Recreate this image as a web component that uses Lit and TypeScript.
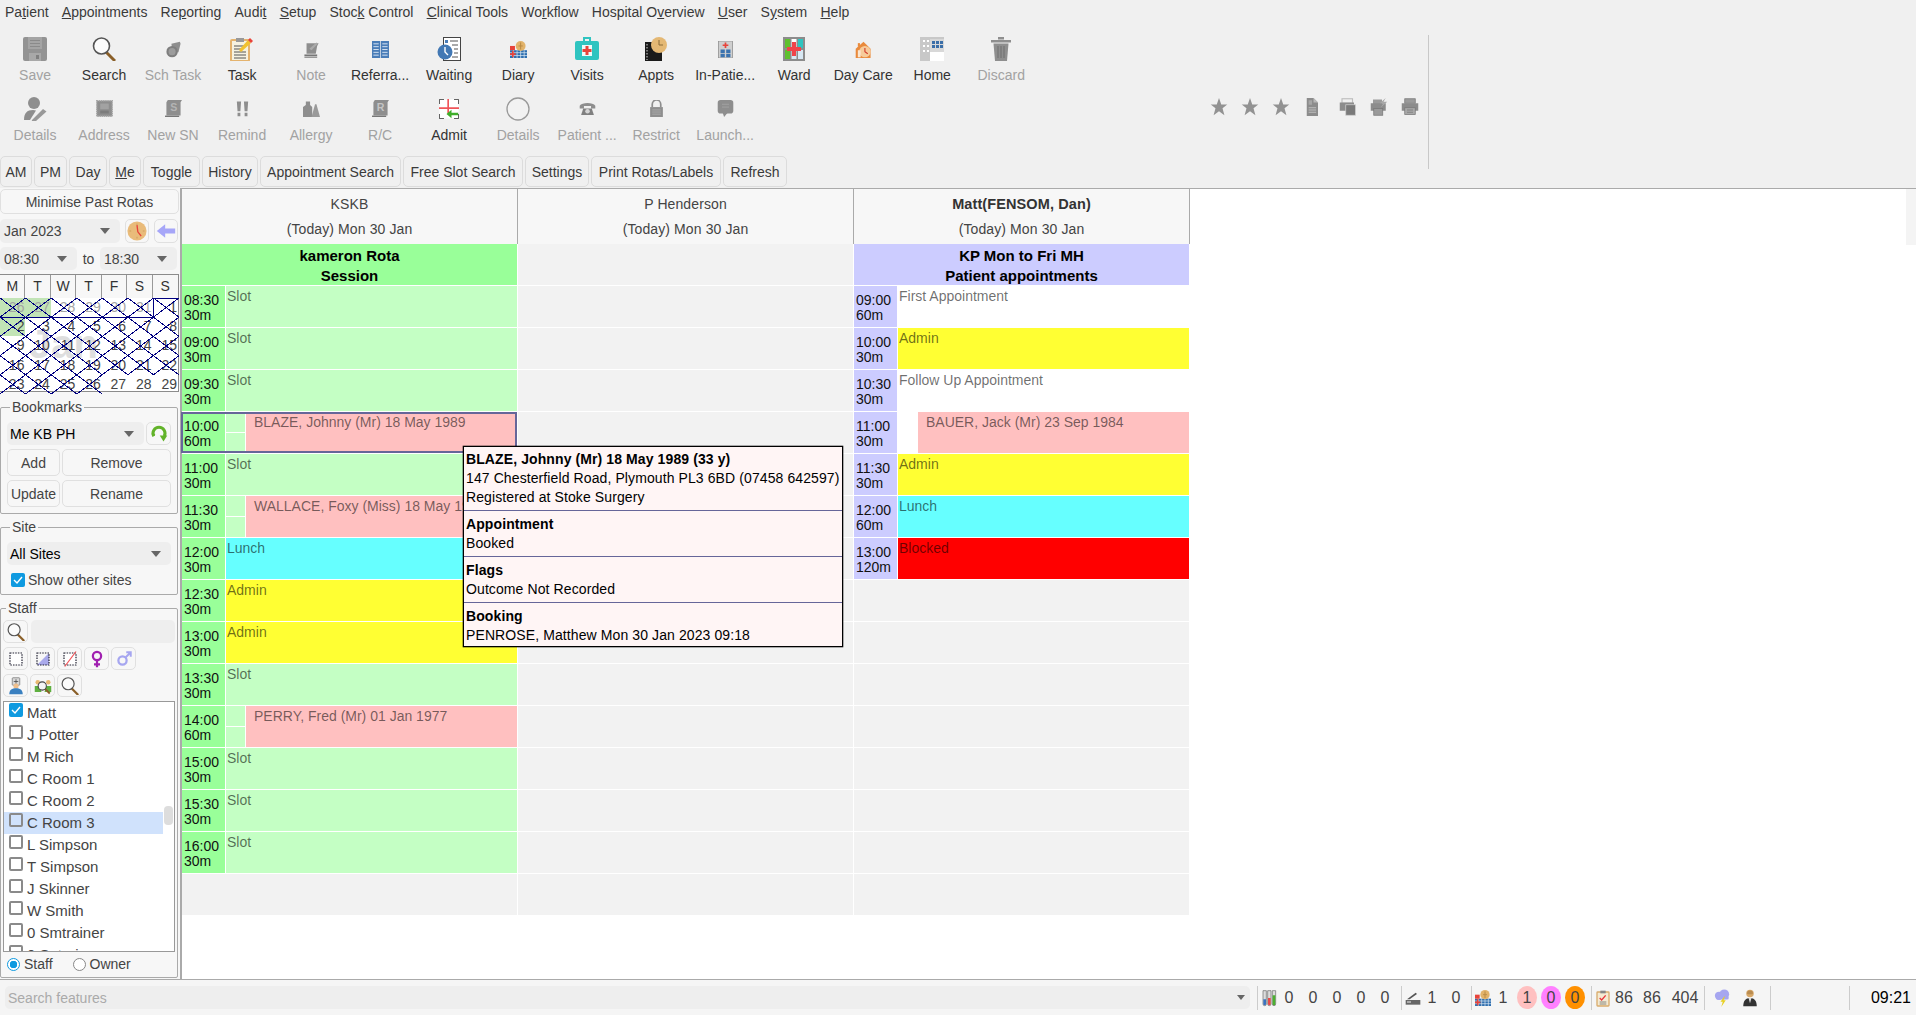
import { LitElement, html, css, svg } from "lit";
import { customElement } from "lit/decorators.js";

const ic = (inner: unknown, w = 24, h = 24) =>
  html`<svg width=${w} height=${h} viewBox="0 0 24 24">${inner}</svg>`;

const G = "#8e8e8e";
const icons: Record<string, unknown> = {
  save: svg`<path d="M0 2a2 2 0 0 1 2-2h20a2 2 0 0 1 2 2v20a2 2 0 0 1-2 2H2a2 2 0 0 1-2-2z" fill="#939393"/><rect x="5" y="0" width="14" height="12" fill="#a4a4a4"/><path d="M7 3.5h10M7 6.5h10M7 9.5h10" stroke="#8a8a8a"/><rect x="6" y="16" width="12" height="8" fill="#a8a8a8"/><rect x="13" y="18" width="3" height="4" fill="#7f7f7f"/>`,
  search: svg`<path d="M14 15l9 9" stroke="#8a5f28" stroke-width="3"/><circle cx="9.5" cy="9" r="8" fill="#fbfbfb" stroke="#555" stroke-width="1.6"/>`,
  schtask: svg`<path d="M9 4l12-3 1 3-3 12-8 1z" fill="${G}"/><circle cx="10" cy="15" r="8" fill="#7e7e7e"/><circle cx="10" cy="15" r="5" fill="#9c9c9c"/>`,
  task: svg`<rect x="1" y="3" width="18" height="21" rx="1" fill="#f6f2e0" stroke="#e4b36e" stroke-width="2"/><rect x="6" y="1" width="8" height="4" fill="#999"/><path d="M4 9h12M4 12h8M4 15h12M4 18h12M4 21h12" stroke="#555"/><path d="M9 13l9-10 3 3-10 9z" fill="#f2c230"/><path d="M18 3l2-2 3 3-2 2z" fill="#e8433a"/>`,
  note: svg`<path d="M5 3h17l-2 4-2 11H5z" fill="${G}"/><path d="M9 11l10-9 2 2-9 9z" fill="#aaa"/><rect x="2" y="19" width="18" height="2.5" fill="#777"/><rect x="2" y="22" width="18" height="2" fill="#999"/>`,
  referral: svg`<rect x="0" y="0" width="11.5" height="24" fill="#4a7db8"/><rect x="12.5" y="0" width="11.5" height="24" fill="#4a7db8"/><path d="M2 4h7.5M2 8h7.5M2 12h7.5M2 16h7.5M2 20h7.5M14.5 4h7.5M14.5 8h7.5M14.5 12h7.5M14.5 16h7.5M14.5 20h7.5" stroke="#d3e2f2" stroke-width="1.4"/>`,
  waiting: svg`<rect x="6.5" y="0.5" width="17" height="23" fill="#fff" stroke="#444"/><path d="M13 4h8M15 8h6M17 12h4M17 16h4M15 20h6" stroke="#555"/><rect x="8" y="3" width="3" height="3" fill="#4a7db8"/><circle cx="8" cy="15" r="7.5" fill="#4278b4"/><path d="M8 10v5l3 3" stroke="#fff" stroke-width="1.4" fill="none"/>`,
  diary: svg`<rect x="0" y="13" width="24" height="11" fill="#2f6fb0"/><path d="M0 16.5h24M0 20.5h24M5 13v11M10 13v11M15 13v11M20 13v11" stroke="#dce8f2"/><circle cx="15" cy="7" r="7" fill="#e2b36a"/><path d="M15 2v10M12 7h6" stroke="#b98a44" stroke-width="1.4"/><rect x="0" y="7" width="7" height="6" fill="#e8433a"/><path d="M4 14v9M0 18.5h8" stroke="#e8433a" stroke-width="2.4"/>`,
  visits: svg`<rect x="9" y="1" width="6" height="4" fill="none" stroke="#2fc4c0" stroke-width="2"/><rect y="4" width="24" height="19" rx="2" fill="#2fc4c0"/><rect x="7" y="8" width="10" height="11" fill="#ebfbfa"/><path d="M12 9v9M7.5 13.5h9" stroke="#e8433a" stroke-width="3"/>`,
  appts: svg`<rect x="1" y="5" width="17" height="19" fill="#1a1a1a"/><path d="M3 7v16" stroke="#777" stroke-dasharray="1.5 1.5" stroke-width="2"/><circle cx="15" cy="8" r="8" fill="#e4b874"/><path d="M15 3v5h4" stroke="#8a6d3a" fill="none"/>`,
  inpatient: svg`<rect x="2" y="0" width="20" height="24" fill="#cfcfcf" stroke="#888"/><path d="M12 2v8M8 6h8" stroke="#e8433a" stroke-width="2.4"/><path d="M5 12h6v5H5zM13 12h6v5h-6zM5 18h6v5H5zM13 18h6v5h-6z" fill="#3a73b0"/>`,
  ward: svg`<rect x="1" width="22" height="24" fill="#8c8c8c"/><rect x="3" y="2" width="5" height="9" fill="#5fc02f"/><rect x="9.5" y="2" width="5" height="9" fill="#fff"/><rect x="16" y="2" width="5" height="9" fill="#2fc4c0"/><rect x="3" y="13" width="5" height="9" fill="#5fc02f"/><rect x="9.5" y="13" width="5" height="9" fill="#d8e8f4"/><rect x="16" y="13" width="5" height="9" fill="#d8e8f4"/><path d="M12 5v14M5 12h14" stroke="#f0434a" stroke-width="4"/>`,
  daycare: svg`<path d="M1 11L12 1l10 10v13H1z" fill="#e98a3c"/><rect x="4" y="3" width="3" height="5" fill="#e98a3c"/><circle cx="14" cy="15" r="8" fill="#f6cb9a"/><path d="M14 10v5l4 3" stroke="#d23c2c" stroke-width="1.6" fill="none"/><rect x="4" y="13" width="4" height="10" fill="#fbe6cf"/>`,
  home: svg`<rect width="24" height="24" fill="#c8c8c8"/><rect x="10" y="15" width="14" height="9" fill="#fff"/><rect x="10" y="2" width="14" height="13" fill="#fff" opacity=".3"/><path d="M12 4h3v3h-3zM16 4h3v3h-3zM20 4h3v3h-3zM12 8h3v3h-3zM16 8h3v3h-3zM20 8h3v3h-3z" fill="#3a6ea8"/><path d="M3 3h2v2H3zM7 3h2v2H7zM3 8h2v2H3zM7 8h2v2H7zM3 13h2v2H3zM7 13h2v2H7z" fill="#fff"/>`,
  discard: svg`<rect x="9" y="0" width="6" height="2.5" fill="${G}"/><rect x="2" y="3" width="20" height="2.5" fill="${G}"/><path d="M4.5 6.5h15l-1.5 17.5h-12z" fill="${G}"/><path d="M9 9v12M12 9v12M15 9v12" stroke="#6e6e6e"/>`,
  pdetails: svg`<circle cx="11" cy="6" r="6" fill="${G}"/><path d="M1 23c0-7 3-10 9-10 1 0 2 .2 3 .5L7 23z" fill="${G}"/><path d="M9 23l11-11 3.5 2.5-11 10-4 .5z" fill="#999"/>`,
  address: svg`<rect x="1" y="1" width="22" height="22" fill="${G}" stroke="#aaa" stroke-dasharray="2 1" stroke-width="2"/><rect x="6" y="5" width="12" height="8" fill="#a2a2a2"/><rect x="6" y="15" width="12" height="4" fill="#7c7c7c"/>`,
  newsn: svg`<path d="M4 0h20l-2 3v19H2V3z" fill="${G}"/><text x="12.5" y="16" text-anchor="middle" font-size="15" font-weight="700" font-family="Liberation Sans, Arial, sans-serif" fill="#b4b4b4">S</text><rect x="0" y="22" width="20" height="2" fill="#777"/>`,
  remind: svg`<path d="M4 2h6l-1 14H5zM14 2h6l-1 14h-4zM5 18h4v5H5zM15 18h4v5h-4z" fill="${G}"/>`,
  allergy: svg`<path d="M0 24V10l4-3V2h6v5l3 3v14z" fill="${G}"/><path d="M12 24l5-18h2l5 18z" fill="#9a9a9a"/>`,
  rc: svg`<path d="M4 0h20l-2 3v19H2V3z" fill="${G}"/><text x="12" y="16" text-anchor="middle" font-size="15" font-weight="700" font-family="Liberation Sans, Arial, sans-serif" fill="#c4c4c4">R</text><rect x="0" y="22" width="20" height="2" fill="#777"/>`,
  admit: svg`<rect x="0.5" y="0.5" width="23" height="23" fill="#fff"/><path d="M0.5 6V0.5H6M18 0.5h5.5V6M23.5 18v5.5H18M6 23.5H0.5V18" stroke="#333" fill="none"/><path d="M11 0v11M0 11h24M11 11v6" stroke="#f0555a" stroke-width="2"/><path d="M9 18l6-5v3.5h8v3h-8V23z" fill="#3fae2a"/>`,
  circle: svg`<circle cx="12" cy="12" r="11" fill="#f2f2f2" stroke="#999" stroke-width="1.3"/>`,
  phone: svg`<path d="M1 8c3-5 19-5 22 0v4h-6V8.5H7V12H1z" fill="${G}"/><path d="M6 12h12l3 9H3z" fill="#808080"/><circle cx="12" cy="16" r="3.2" fill="#d4d4d4"/>`,
  lock: svg`<path d="M6 10V6a6 6 0 0 1 12 0v4" fill="none" stroke="${G}" stroke-width="2.4"/><rect x="3" y="10" width="18" height="14" fill="${G}"/><path d="M6 14h12M6 17h12M6 20h12" stroke="#b4b4b4"/>`,
  bubble: svg`<rect x="1" y="0" width="22" height="19" rx="4" fill="${G}"/><path d="M8 18h7l-5 6z" fill="${G}"/><path d="M7 6h10M7 10h10" stroke="#a8a8a8"/>`,
  star: svg`<path d="M12 0l3 8.5h8l-6.3 5.2 2.5 9.3-7.2-5.4L4.8 23l2.5-9.3L1 8.5h8z" fill="#929292"/>`,
  doc: svg`<path d="M5 0h9l6 6v18H5z" fill="#8c8c8c"/><path d="M14 0v6h6z" fill="#b8b8b8"/><path d="M7.5 3h4.5v6H7.5z" fill="#a6a6a6"/><path d="M7.5 13h10M7.5 16h10M7.5 19h10" stroke="#cfcfcf"/>`,
  copy: svg`<rect x="4" y="1" width="14" height="6" fill="none" stroke="#bcbcbc" stroke-width="1.5"/><rect x="1" y="6" width="19" height="11" fill="#8c8c8c"/><rect x="9" y="9" width="13" height="14" fill="#7a7a7a" stroke="#cfcfcf"/>`,
  bolt: svg`<rect x="4" y="2" width="12" height="6" fill="#9a9a9a"/><rect x="1" y="7" width="20" height="10" fill="#8c8c8c"/><rect x="5" y="14" width="12" height="9" fill="#9a9a9a" stroke="#777"/><path d="M21 0l-8 7h5l-4 6 9-8h-5z" fill="#a8a8a8"/>`,
  printer: svg`<rect x="5" y="1" width="14" height="6" fill="#9a9a9a" stroke="#777"/><rect x="1" y="7" width="22" height="10" fill="#8c8c8c"/><rect x="5" y="13" width="14" height="9" fill="#a8a8a8" stroke="#777"/><path d="M8 16h8M8 19h8" stroke="#777"/>`,
  clock: svg`<circle cx="12" cy="12" r="11.5" fill="#e9bb7a"/><path d="M3 12h2M19 12h2M12 3v2M12 19v2" stroke="#c99a58"/><path d="M12 5l1 8 4 5" stroke="#e8433a" stroke-width="1.6" fill="none"/>`,
  arrow: svg`<path d="M1 12l10-8v5h12v6H11v5z" fill="#a6a6f8"/>`,
  refresh: svg`<path d="M5 15A8 8 0 1 1 19 15" fill="none" stroke="#62b32a" stroke-width="4"/><path d="M13 14h10l-5 8z" fill="#62b32a"/><path d="M3 11l3 3" stroke="#62b32a" stroke-width="3"/>`,
  dotted: svg`<rect x="4" y="4" width="16" height="16" fill="#fff" stroke="#223" stroke-width="1.6" stroke-dasharray="2 1.5"/>`,
  half: svg`<path d="M20 4v16H4z" fill="#a9a9ea"/><rect x="4" y="4" width="16" height="16" fill="none" stroke="#223" stroke-width="1.6" stroke-dasharray="2 1.5"/>`,
  slash: svg`<rect x="4" y="4" width="16" height="16" fill="#fff" stroke="#223" stroke-width="1.6" stroke-dasharray="2 1.5"/><path d="M5 22L20 2" stroke="#f0555a" stroke-width="1.6"/>`,
  female: svg`<circle cx="12" cy="8" r="5.5" fill="none" stroke="#a020b0" stroke-width="3"/><path d="M12 14v9M8 19h8" stroke="#a020b0" stroke-width="3"/>`,
  male: svg`<circle cx="10" cy="14" r="5.5" fill="none" stroke="#a6a6f0" stroke-width="3"/><path d="M14 10l7-7M15 3h6v6" stroke="#a6a6f0" stroke-width="2.6" fill="none"/>`,
  doctor: svg`<rect x="7" y="1" width="10" height="10" rx="1" fill="#d8d8d8" stroke="#777"/><path d="M12 3v6M9 6h6" stroke="#444"/><circle cx="12" cy="12" r="3.5" fill="#f0bf8c"/><path d="M3 23c0-6 4-8 9-8s9 2 9 8z" fill="#3a80c0"/>`,
  groupsearch: svg`<circle cx="5" cy="7" r="3" fill="#e8b870"/><circle cx="19" cy="7" r="3" fill="#e8b870"/><path d="M1 20v-8h7l2 8zM23 20v-8h-7l-2 8z" fill="#5fb040"/><path d="M14 15l7 7" stroke="#8a5f28" stroke-width="2.4"/><circle cx="11" cy="12" r="5.5" fill="#f4f4f4" stroke="#444" stroke-width="1.4"/>`,
  tubes: svg`<path d="M3 1h5v20a2.5 2.5 0 0 1-5 0z" fill="#ddd" stroke="#666"/><path d="M10 1h5v20a2.5 2.5 0 0 1-5 0z" fill="#ddd" stroke="#666"/><path d="M17 1h5v20a2.5 2.5 0 0 1-5 0z" fill="#ddd" stroke="#666"/><path d="M3.5 14h4v7a2 2 0 0 1-4 0z" fill="#3a73c0"/><path d="M10.5 12h4v9a2 2 0 0 1-4 0z" fill="#e84a4a"/><path d="M17.5 8h4v13a2 2 0 0 1-4 0z" fill="#4cb030"/>`,
  scanner: svg`<path d="M3 14L16 4l2 2L7 14z" fill="#555"/><rect x="1" y="15" width="22" height="7" fill="#666"/><rect x="3" y="17" width="6" height="2" fill="#ccc"/>`,
  clip: svg`<rect x="3" y="3" width="18" height="21" rx="1" fill="#f4ead2" stroke="#d9ac6c" stroke-width="2"/><rect x="8" y="1" width="8" height="4" fill="#888"/><path d="M7 12l3 3 6-7" stroke="#e8333a" stroke-width="2" fill="none"/><path d="M7 18h10M7 21h10" stroke="#555"/>`,
  cloud: svg`<circle cx="8" cy="9" r="5.5" fill="#a6a6f0"/><circle cx="15" cy="7" r="6.5" fill="#a6a6f0"/><rect x="4" y="9" width="17" height="5" rx="2.5" fill="#a6a6f0"/><path d="M15 10l-5 7h3l-2 7 6-9h-3l2-5z" fill="#e8d020"/>`,
  person: svg`<circle cx="12" cy="6" r="5" fill="#d8a868"/><path d="M8 6a4 4 0 0 1 8 0l-1 1H9z" fill="#b98c50"/><path d="M3 23c0-7 3-11 9-11s9 4 9 11z" fill="#333"/><path d="M10 12h4l-2 7z" fill="#ddd"/>`,
};

const smallIcons = new Set(["schtask", "note", "referral", "diary", "inpatient", "daycare", "address", "newsn", "remind", "allergy", "rc", "phone", "lock", "bubble", "admit"]);

const tb1: [string, string, boolean][] = [
  ["save", "Save", false], ["search", "Search", true], ["schtask", "Sch Task", false], ["task", "Task", true],
  ["note", "Note", false], ["referral", "Referra...", true], ["waiting", "Waiting", true], ["diary", "Diary", true],
  ["visits", "Visits", true], ["appts", "Appts", true], ["inpatient", "In-Patie...", true], ["ward", "Ward", true],
  ["daycare", "Day Care", true], ["home", "Home", true], ["discard", "Discard", false],
];
const tb2: [string, string, boolean][] = [
  ["pdetails", "Details", false], ["address", "Address", false], ["newsn", "New SN", false], ["remind", "Remind", false],
  ["allergy", "Allergy", false], ["rc", "R/C", false], ["admit", "Admit", true], ["circle", "Details", false],
  ["phone", "Patient ...", false], ["lock", "Restrict", false], ["bubble", "Launch...", false],
];
const menus: [string, string, string][] = [
  ["Pa", "t", "ient"], ["", "A", "ppointments"], ["Re", "p", "orting"], ["Audi", "t", ""], ["", "S", "etup"],
  ["Stoc", "k", " Control"], ["", "C", "linical Tools"], ["Wo", "r", "kflow"], ["Hospital O", "v", "erview"],
  ["", "U", "ser"], ["S", "y", "stem"], ["", "H", "elp"],
];
const tabs: [string, number][] = [["AM", 32], ["PM", 33], ["Day", 38], ["Me", 32], ["Toggle", 57], ["History", 56], ["Appointment Search", 141], ["Free Slot Search", 120], ["Settings", 64], ["Print Rotas/Labels", 130], ["Refresh", 64]];
const staff = ["Matt", "J Potter", "M Rich", "C Room 1", "C Room 2", "C Room 3", "L Simpson", "T Simpson", "J Skinner", "W Smith", "0 Smtrainer", "0 Sntrainer"];
const days = [26, 27, 28, 29, 30, 31, 1, 2, 3, 4, 5, 6, 7, 8, 9, 10, 11, 12, 13, 14, 15, 16, 17, 18, 19, 20, 21, 22, 23, 24, 25, 26, 27, 28, 29];

type Row = { t?: string; d?: string; kind: string; label?: string; sel?: boolean };
const col1: Row[] = [
  { t: "08:30", d: "30m", kind: "slot", label: "Slot" },
  { t: "09:00", d: "30m", kind: "slot", label: "Slot" },
  { t: "09:30", d: "30m", kind: "slot", label: "Slot" },
  { t: "10:00", d: "60m", kind: "split", label: "BLAZE, Johnny (Mr) 18 May 1989", sel: true },
  { t: "11:00", d: "30m", kind: "slot", label: "Slot" },
  { t: "11:30", d: "30m", kind: "split", label: "WALLACE, Foxy (Miss) 18 May 1989" },
  { t: "12:00", d: "30m", kind: "lunch", label: "Lunch" },
  { t: "12:30", d: "30m", kind: "admin", label: "Admin" },
  { t: "13:00", d: "30m", kind: "admin", label: "Admin" },
  { t: "13:30", d: "30m", kind: "slot", label: "Slot" },
  { t: "14:00", d: "60m", kind: "split", label: "PERRY, Fred (Mr) 01 Jan 1977" },
  { t: "15:00", d: "30m", kind: "slot", label: "Slot" },
  { t: "15:30", d: "30m", kind: "slot", label: "Slot" },
  { t: "16:00", d: "30m", kind: "slot", label: "Slot" },
];
const col3: Row[] = [
  { t: "09:00", d: "60m", kind: "free", label: "First Appointment" },
  { t: "10:00", d: "30m", kind: "admin", label: "Admin" },
  { t: "10:30", d: "30m", kind: "free", label: "Follow Up Appointment" },
  { t: "11:00", d: "30m", kind: "bookfree", label: "BAUER, Jack (Mr) 23 Sep 1984" },
  { t: "11:30", d: "30m", kind: "admin", label: "Admin" },
  { t: "12:00", d: "60m", kind: "lunch", label: "Lunch" },
  { t: "13:00", d: "120m", kind: "blocked", label: "Blocked" },
];

const stats: [string, string | number, number?][] = [
  ["sep", 0], ["icon", "tubes", 19], ["n", "0", 24], ["n", "0", 24], ["n", "0", 24], ["n", "0", 24], ["n", "0", 24], ["gap", "", 4],
  ["sep", 0], ["icon", "scanner", 18], ["n", "1", 24], ["n", "0", 24], ["gap", "", 3],
  ["sep", 0], ["icon", "diary", 19], ["n", "1", 24], ["p1", "1", 24], ["p2", "0", 24], ["p3", "0", 24], ["gap", "", 4],
  ["sep", 0], ["icon", "clip", 18], ["n", "86", 28], ["n", "86", 28], ["n", "404", 38],
  ["sep", 0], ["iconc", "cloud", 34], ["iconc", "person", 22], ["gap", "", 9],
  ["sep", 0], ["gap", "", 78], ["sep", 0],
];

@customElement("app-root")
export class AppRoot extends LitElement {
  static styles = css`
    :host {
      display: flex; flex-direction: column; width: 1916px; height: 1015px; overflow: hidden;
      background: #f0f0f0; color: #444; font: 14px/18px "Liberation Sans", Arial, sans-serif;
    }
    svg { display: block; flex: none; }
    .menu { display: flex; gap: 13.2px; height: 24px; padding-left: 5px; align-items: center; color: #3a3a3a; box-sizing: border-box; }
    .top { display: flex; padding-top: 11px; height: 164px; box-sizing: border-box; flex: none; }
    .topleft { width: 1210px; flex: none; }
    .tools { display: grid; grid-template-columns: repeat(15, 69.03px); row-gap: 12px; margin: 2px 0 0 0.5px; height: 107px; }
    .tool { display: flex; flex-direction: column; align-items: center; color: #333; height: 47px; }
    .tool.off { color: #a2a2a2; }
    .tool .box { height: 24px; display: flex; align-items: center; justify-content: center; }
    .tool .lbl { margin-top: 5px; white-space: nowrap; }
    .tabs { display: flex; gap: 2px; margin-top: 12px; }
    .tab { height: 31px; box-sizing: border-box; border: 1px solid #dcdcdc; border-radius: 5px; display: flex; align-items: center; justify-content: center; white-space: nowrap; color: #3a3a3a; flex: none; }
    .cluster { display: flex; gap: 13px; height: 134px; align-items: center; padding-top: 10px; padding-right: 9px; box-sizing: border-box; border-right: 1px solid #c8c8c8; flex: none; }
    .cluster .wide { margin-left: 5px; }

    .mid { display: flex; height: 791px; flex: none; }
    .side { width: 180px; flex: none; background: #f7f7f7; display: flex; flex-direction: column; padding-top: 1px; box-sizing: border-box; }
    .btn { box-sizing: border-box; border: 1px solid #e0e0e0; border-radius: 5px; display: flex; align-items: center; justify-content: center; background: #f7f7f7; }
    .min { height: 25px; width: 179px; }
    .combo { box-sizing: border-box; background: #eee; border-radius: 5px; display: flex; align-items: center; padding-left: 3px; position: relative; height: 23px; }
    .combo::after { content: ""; position: absolute; right: 10px; top: 9px; border: 5px solid transparent; border-top: 6px solid #666; border-bottom: 0; }
    .r1 { display: flex; margin-top: 5px; height: 24px; }
    .r1 .combo { width: 120px; height: 24px; padding-left: 4px; }
    .r1 .i1 { width: 24px; height: 24px; margin-left: 5px; }
    .r2 { display: flex; margin-top: 4px; align-items: center; }
    .r2 .combo { width: 77px; padding-left: 4px; }
    .r2 .to { width: 23px; text-align: center; }

    .cal { margin-top: 4px; width: 179px; height: 118px; box-sizing: border-box; border: 1px solid #8c8c8c; border-left: 0; background: #fff; position: relative; flex: none; }
    .calhead { display: grid; grid-template-columns: repeat(7, 1fr); height: 23px; background: #f7f7f7; }
    .calhead div { border-right: 1px solid #999; text-align: center; line-height: 23px; color: #333; }
    .calhead div:last-child { border-right: 0; }
    .calbody { display: grid; grid-template-columns: repeat(7, 1fr); grid-auto-rows: 19.2px; position: relative; }
    .day { text-align: right; padding-right: 1px; line-height: 19px; position: relative; z-index: 1; }
    .day.prev { color: #a4a4a4; }
    .day.green { background: #c2e4b6; }
    .wm { position: absolute; left: 29px; top: 26px; font-size: 40px; font-weight: bold; line-height: 40px; color: #dedede; z-index: 1; }
    .hatch { position: absolute; left: 0; top: 0; z-index: 2; }

    fieldset { margin: 0; border: 1px solid #aaa; border-radius: 2px; width: 178px; box-sizing: border-box; min-width: 0; }
    legend { padding: 0 2px; margin-left: 3px; line-height: 18px; }
    .bm { margin-top: 6px; padding: 6px; }
    .row { display: flex; gap: 2px; }
    .bm .row.a { margin-top: 4px; }
    .bm .row.b { margin-top: 4px; }
    .bm .combo { width: 137px; color: #000; }
    .bm .i1 { width: 25px; height: 23px; }
    .b1 { width: 53px; height: 27px; }
    .b2 { width: 109px; height: 27px; }
    .site { margin-top: 4px; padding: 6px 6px 5px 6px; }
    .site .combo { color: #000; }
    .chk { width: 14px; height: 14px; box-sizing: border-box; border: 2px solid #8a8a8a; border-radius: 2px; background: #fff; flex: none; }
    .chk.on { background: #0f9ae0; border: 0; display: flex; align-items: center; justify-content: center; }
    .showo { display: flex; align-items: center; gap: 3px; height: 19px; margin-top: 5px; padding-left: 4px; }
    .staff { margin-top: 4px; padding: 3px 2px 0 2px; height: 379px; flex: none; }
    .srch { display: flex; gap: 3px; }
    .srch .inp { width: 144px; height: 23px; background: #eee; border-radius: 5px; }
    .ibtn { width: 25px; height: 23px; box-sizing: border-box; border: 1px solid #e0e0e0; border-radius: 5px; display: flex; align-items: center; justify-content: center; }
    .ibrow { display: flex; gap: 2px; margin-top: 4px; }
    .list { margin-top: 4px; width: 172px; height: 251px; box-sizing: border-box; border: 1px solid #999; background: #fff; overflow: hidden; position: relative; }
    .it { height: 22px; width: 159px; display: flex; align-items: flex-start; gap: 4px; padding-left: 5px; box-sizing: border-box; line-height: 22px; font-size: 15px; }
    .it .chk { margin-top: 1px; }
    .it.hl { background: #d0e2fc; }
    .it.hl .chk { background: #d0e2fc; }
    .thumb { position: absolute; left: 160px; top: 104px; width: 9px; height: 19px; border-radius: 4px; background: #ddd; }
    .radios { display: flex; align-items: center; height: 24px; padding-left: 4px; }
    .rd { width: 13px; height: 13px; box-sizing: border-box; border-radius: 50%; border: 1.5px solid #888; background: #fff; margin-right: 4px; flex: none; }
    .rd.on { border-color: #0f9ae0; background: radial-gradient(circle, #0f9ae0 0 3.5px, #fff 4px); }
    .rd.ownr { margin-left: 20px; }

    .main { flex: 1; background: #fff; border-top: 1px solid #aaa; border-left: 2px solid #aaa; position: relative; box-sizing: border-box; }
    .heads { display: grid; grid-template-columns: repeat(3, 335px); column-gap: 1px; width: 1008px; padding-right: 1px; box-sizing: border-box; background: #aaa; height: 55px; }
    .head { background: #f7f7f7; text-align: center; line-height: 25px; padding-top: 3px; box-sizing: border-box; letter-spacing: .1px; }
    .head b { color: #333; font-size: 14.5px; }
    .body { display: grid; grid-template-columns: repeat(3, 335px); column-gap: 1px; }
    .title { height: 41px; margin-bottom: 1px; text-align: center; font-weight: bold; font-size: 15px; line-height: 20px; color: #000; padding-top: 2px; box-sizing: border-box; }
    .c-green .title { background: #99ff99; }
    .c-none .title { background: #f2f2f2; }
    .c-blue .title { background: #ccccff; }
    .rw { display: flex; height: 41px; margin-bottom: 1px; gap: 1px; background: #fff; }
    .rw.empty { background: #f2f2f2; }
    .time { width: 43px; flex: none; padding: 6.5px 0 0 2px; box-sizing: border-box; line-height: 15.5px; color: #111; }
    .c-green .time { background: #99ff99; }
    .c-blue .time { background: #ccccff; }
    .cell { flex: 1; padding: 0 0 0 1px; line-height: 20px; color: rgba(0,0,0,.58); min-width: 0; white-space: nowrap; overflow: hidden; }
    .k-slot { background: #c4ffc4; }
    .k-lunch { background: #66ffff; }
    .k-admin { background: #ffff33; }
    .k-free { background: #fff; }
    .k-blocked { background: #ff0000; }
    .splitwrap { flex: 1; display: flex; gap: 1px; min-width: 0; }
    .minis { width: 19px; flex: none; display: flex; flex-direction: column; gap: 1px; }
    .minis div { flex: 1; background: #c4ffc4; }
    .minis.w div { background: #fff; }
    .pink { flex: 1; background: #ffc0c0; padding-left: 8px; line-height: 20px; color: rgba(0,0,0,.55); white-space: nowrap; overflow: hidden; }
    .sel { margin-left: -1px; outline: 2px solid #666699; outline-offset: -2px; position: relative; }
    .sel .time { width: 44px; padding-left: 3px; }

    .tip { position: absolute; left: 281px; top: 257px; width: 380px; box-sizing: border-box; border: 1px solid #000; box-shadow: 0 0 0 .3px #000; background: #fff5f5; color: #000; z-index: 5; letter-spacing: .1px; }
    .sec { padding: 3.5px 0 0 2px; line-height: 19px; border-bottom: 1px solid #666699; box-sizing: border-box; height: 46px; white-space: nowrap; }
    .sec:first-child { height: 64px; padding-top: 2.5px; }
    .sec:last-child { border-bottom: 0; height: 43px; }
    .sbar { position: absolute; right: 0; top: 0; width: 10px; height: 56px; background: #f4f4f4; }

    .status { height: 36px; box-sizing: border-box; border-top: 1px solid #aaa; background: #f5f5f5; display: flex; align-items: center; padding-left: 5px; flex: none; }
    .sf { width: 1245px; height: 23px; background: #eee; border-radius: 5px; color: #aaa; display: flex; align-items: center; padding-left: 3px; box-sizing: border-box; position: relative; margin-right: 7px; flex: none; }
    .sf::after { content: ""; position: absolute; right: 5px; top: 9px; border: 4px solid transparent; border-top: 5px solid #666; border-bottom: 0; }
    .vs { width: 1px; height: 24px; background: #ccc; flex: none; }
    .st { display: flex; align-items: center; justify-content: center; flex: none; height: 24px; color: #444; font-size: 16px; }
    .st.il { justify-content: flex-start; padding-left: 3px; box-sizing: border-box; }
    .pill { width: 20px; height: 23px; border-radius: 50%; display: flex; align-items: center; justify-content: center; }
    .p1 .pill { background: #ffc0c0; }
    .p2 .pill { background: #ff80ff; }
    .p3 .pill { background: #ff9000; }
    .clk { flex: 1; text-align: right; padding-right: 5px; color: #000; font-size: 16px; }
  `;

  private renderRow(r: Row) {
    const time = html`<div class="time">${r.t}<br />${r.d}</div>`;
    if (r.kind === "split") {
      return html`<div class="rw ${r.sel ? "sel" : ""}">${time}
        <div class="splitwrap"><div class="minis"><div></div><div></div></div><div class="pink">${r.label}</div></div></div>`;
    }
    if (r.kind === "bookfree") {
      return html`<div class="rw">${time}<div class="splitwrap"><div class="minis w"><div></div><div></div></div><div class="pink">${r.label}</div></div></div>`;
    }
    return html`<div class="rw">${time}<div class="cell k-${r.kind}">${r.label}</div></div>`;
  }

  private renderHatch() {
    const w = 179 / 7, h = 19.2;
    const lines: unknown[] = [];
    for (let i = 0; i < 32; i++) {
      const x = (i % 7) * w, y = Math.floor(i / 7) * h;
      lines.push(svg`<path d="M${x} ${y}L${x + w} ${y + h}M${x + w} ${y}L${x} ${y + h}"/>`);
    }
    return html`<svg class="hatch" width="179" height="97" viewBox="0 0 179 97" fill="none" stroke="#000080" stroke-width="1" shape-rendering="crispEdges">
      ${lines}<path d="M0 ${h}H${6 * w}V0H179"/></svg>`;
  }

  render() {
    const tool = (t: [string, string, boolean]) => {
      const s = smallIcons.has(t[0]) ? (t[0] === "admit" ? 20 : 17) : 24;
      return html`<div class="tool ${t[2] ? "" : "off"}"><div class="box">${ic(icons[t[0]], s, s)}</div><div class="lbl">${t[1]}</div></div>`;
    };
    const small = (n: string) => html`<div class="ibtn">${ic(icons[n], 18, 18)}</div>`;
    return html`
      <div class="menu">${menus.map((m) => html`<span>${m[0]}<u>${m[1]}</u>${m[2]}</span>`)}</div>
      <div class="top">
        <div class="topleft">
          <div class="tools">${tb1.map(tool)}${tb2.map(tool)}</div>
          <div class="tabs">${tabs.map((t) => html`<div class="tab" style=${`width:${t[1]}px`}>${t[0] === "Me" ? html`<u>M</u>e` : t[0]}</div>`)}</div>
        </div>
        <div class="cluster">
          ${ic(icons.star, 18, 18)}${ic(icons.star, 18, 18)}${ic(icons.star, 18, 18)}${ic(icons.doc, 18, 18)}
          <span class="wide">${ic(icons.copy, 18, 18)}</span>${ic(icons.bolt, 18, 18)}${ic(icons.printer, 18, 18)}
        </div>
      </div>
      <div class="mid">
        <div class="side">
          <div class="btn min">Minimise Past Rotas</div>
          <div class="r1">
            <div class="combo">Jan 2023</div>
            <div class="btn i1">${ic(icons.clock, 20, 20)}</div>
            <div class="btn i1">${ic(icons.arrow, 20, 20)}</div>
          </div>
          <div class="r2"><div class="combo">08:30</div><div class="to">to</div><div class="combo">18:30</div></div>
          <div class="cal">
            <div class="calhead">${["M", "T", "W", "T", "F", "S", "S"].map((d) => html`<div>${d}</div>`)}</div>
            <div class="calbody">
              <div class="wm">Jan</div>
              ${days.map((d, i) => html`<div class="day ${i < 6 ? "prev" : ""} ${i === 0 || i === 1 || i === 7 ? "green" : ""}">${d}</div>`)}
              ${this.renderHatch()}
            </div>
          </div>
          <fieldset class="bm">
            <legend>Bookmarks</legend>
            <div class="row"><div class="combo">Me KB PH</div><div class="btn i1">${ic(icons.refresh, 18, 18)}</div></div>
            <div class="row a"><div class="btn b1">Add</div><div class="btn b2">Remove</div></div>
            <div class="row b"><div class="btn b1">Update</div><div class="btn b2">Rename</div></div>
          </fieldset>
          <fieldset class="site">
            <legend>Site</legend>
            <div class="combo">All Sites</div>
            <div class="showo"><span class="chk on"><svg width="10" height="10" viewBox="0 0 10 10"><path d="M1 5l3 3 5-6" stroke="#fff" stroke-width="1.4" fill="none"/></svg></span>Show other sites</div>
          </fieldset>
          <fieldset class="staff">
            <legend>Staff</legend>
            <div class="srch">${small("search")}<div class="inp"></div></div>
            <div class="ibrow">${small("dotted")}${small("half")}${small("slash")}${small("female")}${small("male")}</div>
            <div class="ibrow">${small("doctor")}${small("groupsearch")}${small("search")}</div>
            <div class="list">
              ${staff.map((s, i) => html`<div class="it ${i === 5 ? "hl" : ""}"><span class="chk ${i === 0 ? "on" : ""}">${i === 0 ? html`<svg width="10" height="10" viewBox="0 0 10 10"><path d="M1 5l3 3 5-6" stroke="#fff" stroke-width="1.4" fill="none"/></svg>` : ""}</span>${s}</div>`)}
              <div class="thumb"></div>
            </div>
            <div class="radios"><span class="rd on"></span>Staff<span class="rd ownr"></span>Owner</div>
          </fieldset>
        </div>
        <div class="main">
          <div class="heads">
            <div class="head">KSKB<br />(Today) Mon 30 Jan</div>
            <div class="head">P Henderson<br />(Today) Mon 30 Jan</div>
            <div class="head"><b>Matt(FENSOM, Dan)</b><br />(Today) Mon 30 Jan</div>
          </div>
          <div class="body">
            <div class="c-green"><div class="title">kameron Rota<br />Session</div>${col1.map((r) => this.renderRow(r))}<div class="rw empty"></div></div>
            <div class="c-none"><div class="title"></div>${Array.from({ length: 15 }, () => html`<div class="rw empty"></div>`)}</div>
            <div class="c-blue"><div class="title">KP Mon to Fri MH<br />Patient appointments</div>${col3.map((r) => this.renderRow(r))}${Array.from({ length: 8 }, () => html`<div class="rw empty"></div>`)}</div>
          </div>
          <div class="tip">
            <div class="sec"><b>BLAZE, Johnny (Mr) 18 May 1989 (33 y)</b><br />147 Chesterfield Road, Plymouth PL3 6BD (07458 642597)<br />Registered at Stoke Surgery</div>
            <div class="sec"><b>Appointment</b><br />Booked</div>
            <div class="sec"><b>Flags</b><br />Outcome Not Recorded</div>
            <div class="sec"><b>Booking</b><br />PENROSE, Matthew Mon 30 Jan 2023 09:18</div>
          </div>
          <div class="sbar"></div>
        </div>
      </div>
      <div class="status">
        <div class="sf">Search features</div>
        ${stats.map((s) => {
          const w = `width:${s[2]}px`;
          if (s[0] === "sep") return html`<div class="vs"></div>`;
          if (s[0] === "gap") return html`<div class="st" style=${w}></div>`;
          if (s[0] === "icon") return html`<div class="st il" style=${w}>${ic(icons[s[1] as string], 16, 22)}</div>`;
          if (s[0] === "iconc") return html`<div class="st" style=${w}>${ic(icons[s[1] as string], 18, 22)}</div>`;
          if (s[0] === "n") return html`<div class="st" style=${w}>${s[1]}</div>`;
          return html`<div class="st ${s[0]}" style=${w}><div class="pill">${s[1]}</div></div>`;
        })}
        <div class="clk">09:21</div>
      </div>
    `;
  }
}
